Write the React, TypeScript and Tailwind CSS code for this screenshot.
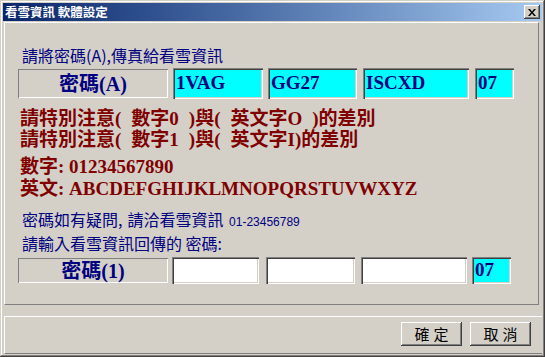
import React from "react";

const serif = { fontFamily: '"Liberation Serif", "Noto Sans CJK TC", serif' };
const sans = { fontFamily: '"Noto Sans CJK TC", "Liberation Sans", sans-serif' };

function Field({ w, text, cyan, h }: { w: string; text?: string; cyan?: boolean; h: string }) {
  return (
    <div
      className={`${w} ${h} ${cyan ? "bg-[#00ffff]" : "bg-white"} flex items-center pl-[3px] text-[19px] font-bold text-[#000080] shadow-[inset_1px_1px_#808080,inset_2px_2px_#404040,inset_-1px_-1px_#ffffff,inset_-2px_-2px_#d4d0c8]`}
      style={serif}
    >
      {text}
    </div>
  );
}

function LabelBtn({ text, h }: { text: string; h: string }) {
  return (
    <div
      className={`w-[150px] ${h} flex items-center justify-center bg-[#d4d0c8] text-[20px] font-bold text-[#000080] shadow-[inset_1px_1px_#808080,inset_-1px_-1px_#ffffff]`}
      style={serif}
    >
      {text}
    </div>
  );
}

function Win98Btn({ text }: { text: string }) {
  return (
    <div
      className="w-[61px] h-[24px] flex items-center justify-center bg-[#d4d0c8] text-[15px] text-black tracking-[4px] pl-[4px] shadow-[inset_-1px_-1px_#404040,inset_1px_1px_#ffffff,inset_-2px_-2px_#808080,inset_2px_2px_#d4d0c8]"
      style={sans}
    >
      {text}
    </div>
  );
}

function Sp() {
  return <span className="inline-block w-[10px]"> </span>;
}

export default function App() {
  return (
    <div className="w-[545px] h-[357px] bg-[#d4d0c8] p-[3px] flex flex-col shadow-[inset_-1px_-1px_#404040,inset_1px_1px_#d4d0c8,inset_-2px_-2px_#808080,inset_2px_2px_#ffffff]">
      {/* title bar */}
      <div className="h-[18px] flex items-center justify-between bg-gradient-to-r from-[#0a246a] to-[#a6caf0] pl-[2px] pr-[2px]">
        <span className="text-white text-[12.5px] font-bold leading-none" style={sans}>
          看雪資訊 軟體設定
        </span>
        <div className="w-[16px] h-[14px] bg-[#d4d0c8] flex items-center justify-center shadow-[inset_-1px_-1px_#404040,inset_1px_1px_#ffffff,inset_-2px_-2px_#808080,inset_2px_2px_#d4d0c8]">
          <svg width="8" height="7" viewBox="0 0 8 7">
            <path d="M0 0h2l2 2.5L6 0h2L5 3.5 8 7H6L4 4.5 2 7H0l3-3.5z" fill="#000" />
          </svg>
        </div>
      </div>

      {/* upper panel */}
      <div className="mt-[1px] ml-[1px] w-[535px] h-[283px] border-t border-l border-white border-r border-b border-r-[#808080] border-b-[#808080] pl-[13px] flex flex-col">
        <div className="mt-[22px] ml-[4px] text-[16px] leading-[20px] text-[#000080]" style={sans}>
          請將密碼(A),傳真給看雪資訊
        </div>
        <div className="mt-[3px] flex items-center h-[31px]">
          <LabelBtn text="密碼(A)" h="h-[29px]" />
          <div className="ml-[5px]"><Field w="w-[90px]" h="h-[31px]" text="1VAG" cyan /></div>
          <div className="ml-[5px]"><Field w="w-[89px]" h="h-[31px]" text="GG27" cyan /></div>
          <div className="ml-[6px]"><Field w="w-[106px]" h="h-[31px]" text="ISCXD" cyan /></div>
          <div className="ml-[6px]"><Field w="w-[39px]" h="h-[31px]" text="07" cyan /></div>
        </div>
        <div className="mt-[9px] ml-[2px] text-[19px] leading-[21px] font-bold text-[#800000]" style={serif}>
          <div>請特別注意(<Sp />數字0<Sp />)與(<Sp />英文字O<Sp />)的差別</div>
          <div>請特別注意(<Sp />數字1<Sp />)與(<Sp />英文字I)的差別</div>
          <div className="mt-[6px]">數字: 01234567890</div>
          <div className="mt-[1px]">英文: ABCDEFGHIJKLMNOPQRSTUVWXYZ</div>
        </div>
        <div className="mt-[10px] ml-[4px] text-[16px] leading-[21px] text-[#000080]" style={sans}>
          <div>
            密碼如有疑問<span className="mr-[5px]">,</span>請洽看雪資訊 <span className="text-[12px] ml-[2px]" style={{ fontFamily: '"Liberation Sans", sans-serif' }}>01-23456789</span>
          </div>
          <div>請輸入看雪資訊回傳的 密碼:</div>
        </div>
        <div className="mt-[3px] flex items-center h-[27px]">
          <LabelBtn text="密碼(1)" h="h-[25px]" />
          <div className="ml-[4px]"><Field w="w-[87px]" h="h-[27px]" /></div>
          <div className="ml-[7px]"><Field w="w-[89px]" h="h-[27px]" /></div>
          <div className="ml-[6px]"><Field w="w-[106px]" h="h-[27px]" /></div>
          <div className="ml-[5px]"><Field w="w-[39px]" h="h-[27px]" text="07" cyan /></div>
        </div>
      </div>

      {/* bottom panel */}
      <div className="mt-[11px] ml-[1px] flex-1 border-t border-l border-white border-b border-b-[#808080] flex items-start justify-end pt-[5px] pr-[11px] gap-[8px]">
        <Win98Btn text="確定" />
        <Win98Btn text="取消" />
      </div>
    </div>
  );
}
